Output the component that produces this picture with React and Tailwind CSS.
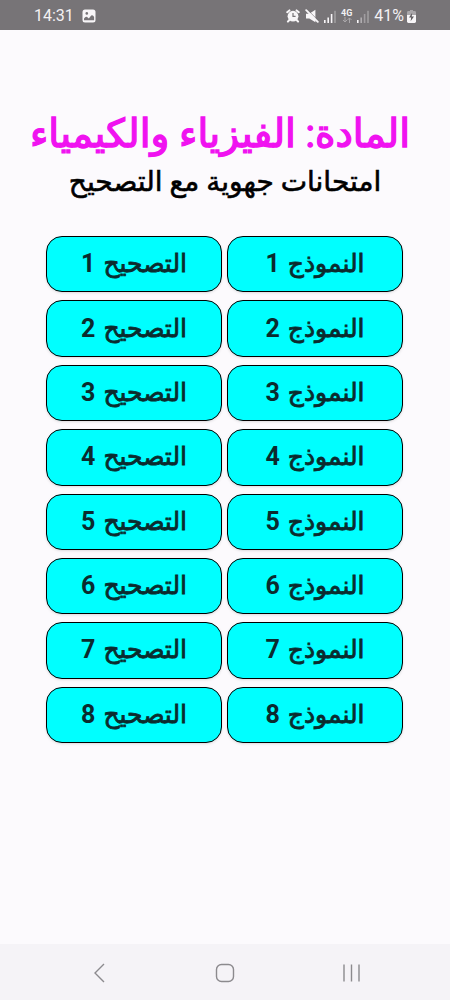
const exams = [1, 2, 3, 4, 5, 6, 7, 8];

function ImageIcon() {
  return (
    <svg viewBox="0 0 14 14" className="h-3.5 w-3.5">
      <rect x="0.5" y="0.5" width="13" height="13" rx="2.5" fill="#f8f6f8" />
      <circle cx="4.8" cy="4.4" r="1.3" fill="#777477" />
      <path
        d="M2 11.3V9.4q2-3 4-.6l.8.6 2.4-2.8q1-1 2 .2l.9 1.2v3.3z"
        fill="#777477"
      />
    </svg>
  );
}

function AlarmIcon() {
  return (
    <svg viewBox="0 0 14 14" className="h-3.5 w-3.5" fill="none">
      <circle cx="7" cy="7.2" r="5.4" fill="#f8f6f8" />
      <path
        d="M1.2 3.2 3.4 1.4M12.8 3.2 10.6 1.4M3.3 11l-1.4 1.6M10.7 11l1.4 1.6"
        stroke="#f8f6f8"
        strokeWidth="2"
        strokeLinecap="round"
      />
      <path d="M7 4v3.4h2.6" stroke="#777477" strokeWidth="1.2" />
    </svg>
  );
}

function MuteIcon() {
  return (
    <svg viewBox="0 0 14 14" className="h-3.5 w-3.5" fill="none">
      <path d="M1 4.8h3.3L10.4.8v12.4L4.3 9.6H1z" fill="#f8f6f8" />
      <path d="M2 .4 13.6 12" stroke="#777477" strokeWidth="0.9" />
      <path
        d="M1.2 1.2 12.8 12.8"
        stroke="#f8f6f8"
        strokeWidth="1.9"
        strokeLinecap="round"
      />
    </svg>
  );
}

function SignalIcon({ weak }) {
  return (
    <svg viewBox="0 0 12 13" className="h-[13px] w-3">
      <rect x="0" y="10" width="1.6" height="3" fill="#f8f6f8" />
      <rect
        x="3.4"
        y="7.5"
        width="1.6"
        height="5.5"
        fill={weak ? "#b0adb0" : "#f8f6f8"}
      />
      <rect
        x="6.8"
        y="4"
        width="1.6"
        height="9"
        fill={weak ? "#a09da0" : "#f8f6f8"}
      />
      <rect x="10.2" y="0.8" width="1.6" height="12.2" fill="#a09da0" />
    </svg>
  );
}

function DataIcon() {
  return (
    <svg viewBox="0 0 10 6" className="h-1.5 w-2.5" fill="none">
      <path
        d="M3 0v5M1 3l2 2 2-2M7.5 6V1M5.5 3l2-2 2 2"
        stroke="#aaa7aa"
        strokeWidth="1"
      />
    </svg>
  );
}

function BatteryIcon() {
  return (
    <svg viewBox="0 0 9 14" className="h-3.5 w-[9px]">
      <path
        d="M3 1h3v1h1.6Q9 2 9 3.4V6H0V3.4Q0 2 1.4 2H3z"
        fill="#aaa7aa"
      />
      <path d="M0 6h9v6.6Q9 14 7.6 14H1.4Q0 14 0 12.6z" fill="#f8f6f8" />
      <path d="M5.2 3.8 2 8.6h2.2l-.6 3.6L7 7.4H4.7z" fill="#5f5c5f" />
    </svg>
  );
}

function StatusBar() {
  return (
    <header className="flex h-[30px] items-center justify-between bg-[#777477] px-[34px] pt-0.5 text-[#f3f1f3]">
      <div className="flex items-center gap-2">
        <span className="text-base">14:31</span>
        <ImageIcon />
      </div>
      <div className="flex items-center gap-[5px]">
        <AlarmIcon />
        <MuteIcon />
        <SignalIcon />
        <div className="flex flex-col items-center">
          <span className="text-[9px] leading-[8px] font-bold">4G</span>
          <DataIcon />
        </div>
        <SignalIcon weak />
        <div className="flex items-center gap-[3px]">
          <span className="text-base">41%</span>
          <BatteryIcon />
        </div>
      </div>
    </header>
  );
}

function ExamButton({ label, number }) {
  return (
    <button
      type="button"
      className="flex items-center justify-center gap-2 rounded-[16px] border border-black bg-[#00ffff] text-[25px] leading-8 text-[#0b2b2e] shadow"
    >
      <span className="[-webkit-text-stroke:0.8px]">{label}</span>
      <span className="font-bold">{number}</span>
    </button>
  );
}

function NavBar() {
  return (
    <nav className="flex h-14 items-center justify-around bg-[#f5f3f7] px-9 pt-0.5 text-[#8c8a8e]">
      <button type="button" aria-label="رجوع">
        <svg viewBox="0 0 20 20" className="h-5 w-5" fill="none">
          <path d="M15 1 6 10l9 9" stroke="currentColor" strokeWidth="1.4" />
        </svg>
      </button>
      <button type="button" aria-label="الرئيسية">
        <svg viewBox="0 0 20 20" className="h-5 w-5" fill="none">
          <rect
            x="1.5"
            y="1.5"
            width="17"
            height="17"
            rx="5"
            stroke="currentColor"
            strokeWidth="1.4"
          />
        </svg>
      </button>
      <button type="button" aria-label="التطبيقات الأخيرة">
        <svg viewBox="0 0 20 20" className="h-5 w-5" fill="none">
          <path
            d="M3 1.5v17M10.5 1.5v17M18 1.5v17"
            stroke="currentColor"
            strokeWidth="1.4"
          />
        </svg>
      </button>
    </nav>
  );
}

export default function App() {
  return (
    <div className="flex min-h-screen flex-col bg-[#fcfafd] font-[Roboto,'DejaVu_Sans',sans-serif]">
      <StatusBar />
      <main dir="rtl" className="flex-1 pt-20">
        <h1 className="pr-5 pl-2.5 text-center text-[39px] leading-[48px] whitespace-nowrap text-[#f012f0] [-webkit-text-stroke:1.4px]">
          المادة: الفيزياء والكيمياء
        </h1>
        <p className="text-center text-[28px] leading-[48px] text-black [-webkit-text-stroke:0.6px]">
          امتحانات جهوية مع التصحيح
        </p>
        <div className="mt-[30px] mr-[47px] ml-[46px] grid h-[507px] auto-rows-fr grid-cols-2 gap-x-[5px] gap-y-2">
          {exams.map((n) => (
            <div key={n} className="contents">
              <ExamButton label="النموذج" number={n} />
              <ExamButton label="التصحيح" number={n} />
            </div>
          ))}
        </div>
      </main>
      <NavBar />
    </div>
  );
}
